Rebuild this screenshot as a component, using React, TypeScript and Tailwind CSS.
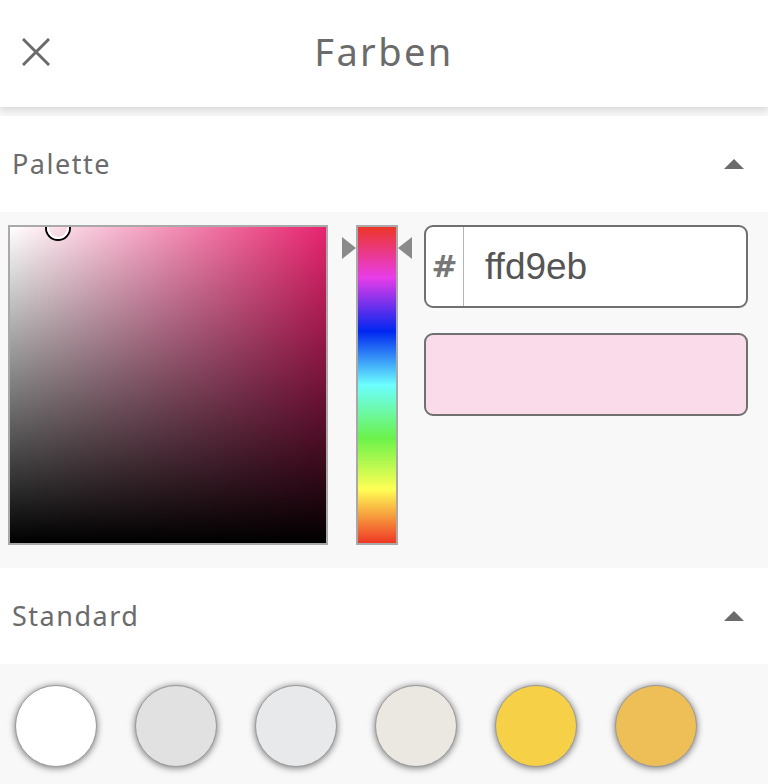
import React from 'react';

const swatches = ['#ffffff', '#e1e1e1', '#e8e9eb', '#ebe8e2', '#f6d148', '#eebf57'];

function Caret() {
  return (
    <svg width="20" height="11" viewBox="0 0 20 11" className="mr-[24px]">
      <polygon points="10,0 20,10 0,10" fill="#6b6b6b" />
    </svg>
  );
}

function SectionHeader({ title }: { title: string }) {
  return (
    <div className="h-[96px] bg-white flex items-center justify-between pl-[12px]">
      <span className="text-[27px] text-[#6b6b6b] tracking-[1.5px]">{title}</span>
      <Caret />
    </div>
  );
}

export default function App() {
  return (
    <div
      className="w-[768px] h-[784px] bg-[#f8f8f8] overflow-hidden"
      style={{ fontFamily: '"Noto Sans", "Open Sans", sans-serif' }}
    >
      <header className="relative z-10 h-[107px] bg-white shadow-[0_3px_8px_rgba(0,0,0,0.14)] flex items-center justify-center pb-[5px]">
        <button className="absolute left-[22px] top-[38px]">
          <svg width="28" height="28" viewBox="0 0 28 28">
            <path d="M2 2 L26 26 M26 2 L2 26" stroke="#6b6b6b" strokeWidth="3" strokeLinecap="square" />
          </svg>
        </button>
        <h1 className="text-[38px] text-[#6b6b6b] leading-none tracking-[2.4px]">Farben</h1>
      </header>

      <div className="mt-[9px]">
        <SectionHeader title="Palette" />
      </div>

      <div className="h-[356px] pt-[13px] pl-[8px] flex items-start">
        <div className="relative w-[320px] h-[320px] border-2 border-[#a9a9a9] overflow-hidden bg-[#e8246f]">
          <div className="absolute inset-0 bg-[linear-gradient(to_right,#ffffff,rgba(255,255,255,0))]" />
          <div className="absolute inset-0 bg-[linear-gradient(to_top,#000000,rgba(0,0,0,0))]" />
          <div className="absolute left-[35px] top-[-12px] w-[26px] h-[26px] rounded-full border-2 border-black">
            <div className="w-full h-full rounded-full border-2 border-white" />
          </div>
        </div>

        <div className="relative ml-[28px] w-[42px] h-[320px] border-2 border-[#a9a9a9] bg-[linear-gradient(to_bottom,#ec3628_0%,#e83de8_16%,#0026f0_33%,#6cffff_50%,#6cf24a_67%,#ffff55_83%,#ee3825_100%)]">
          <svg width="14" height="22" viewBox="0 0 14 22" className="absolute left-[-16px] top-[10px]">
            <polygon points="0,0 14,11 0,22" fill="#8a8a8a" />
          </svg>
          <svg width="14" height="22" viewBox="0 0 14 22" className="absolute right-[-16px] top-[10px]">
            <polygon points="14,0 0,11 14,22" fill="#8a8a8a" />
          </svg>
        </div>

        <div
          className="ml-[26px] w-[324px] flex flex-col gap-[25px]"
          style={{ fontFamily: '"Liberation Sans", Arial, sans-serif' }}
        >
          <div className="h-[83px] bg-white border-2 border-[#707070] rounded-[9px] flex items-stretch overflow-hidden">
            <div
              className="w-[38px] flex items-center justify-center border-r border-[#b5b5b5] text-[31px] font-bold text-[#777777]"
              style={{ fontFamily: '"DejaVu Sans", "Liberation Sans", sans-serif' }}
            >
              #
            </div>
            <div className="flex items-center pl-[21px] text-[37px] text-[#555555]">ffd9eb</div>
          </div>
          <div className="h-[83px] bg-[#f9dbe9] border-2 border-[#707070] rounded-[9px]" />
        </div>
      </div>

      <SectionHeader title="Standard" />

      <div className="pt-[21px] pl-[15px] flex gap-[38px]">
        {swatches.map((c) => (
          <div
            key={c}
            className="w-[82px] h-[82px] rounded-full border border-[#999999] shadow-[0_1px_7px_rgba(0,0,0,0.55)]"
            style={{ backgroundColor: c }}
          />
        ))}
      </div>
    </div>
  );
}
